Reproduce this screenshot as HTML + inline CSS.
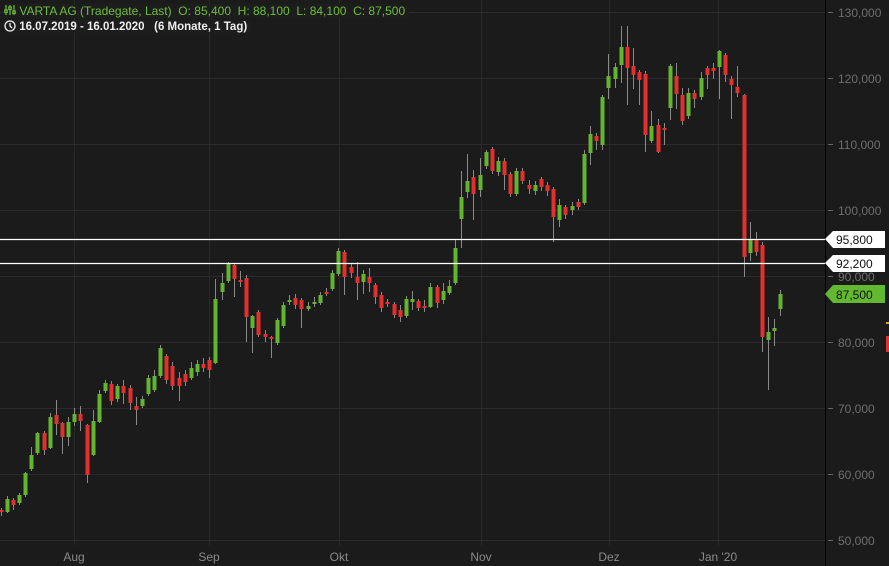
<!DOCTYPE html>
<html><head><meta charset="utf-8"><style>
html,body{margin:0;padding:0;background:#1b1b1b;width:889px;height:566px;overflow:hidden;font-family:"Liberation Sans",sans-serif}
svg{position:absolute;left:0;top:0}
.hd{position:absolute;left:4px;font-size:12px;white-space:nowrap}
</style></head><body>
<svg id="s" width="889" height="566" xmlns="http://www.w3.org/2000/svg">
<g stroke="#2a2a2a" stroke-width="1">
<line x1="0" y1="12.5" x2="825" y2="12.5"/><line x1="0" y1="78.5" x2="825" y2="78.5"/><line x1="0" y1="144.5" x2="825" y2="144.5"/><line x1="0" y1="210.5" x2="825" y2="210.5"/><line x1="0" y1="276.5" x2="825" y2="276.5"/><line x1="0" y1="342.5" x2="825" y2="342.5"/><line x1="0" y1="408.5" x2="825" y2="408.5"/><line x1="0" y1="474.5" x2="825" y2="474.5"/><line x1="0" y1="540.5" x2="825" y2="540.5"/>
<line x1="74.5" y1="0" x2="74.5" y2="545"/><line x1="209.5" y1="0" x2="209.5" y2="545"/><line x1="339.5" y1="0" x2="339.5" y2="545"/><line x1="481.5" y1="0" x2="481.5" y2="545"/><line x1="609.5" y1="0" x2="609.5" y2="545"/><line x1="718.5" y1="0" x2="718.5" y2="545"/>
</g>
<g id="c"></g>
<line x1="0" y1="239.5" x2="825" y2="239.5" stroke="#fff" stroke-width="1.3"/>
<line x1="0" y1="263.5" x2="825" y2="263.5" stroke="#fff" stroke-width="1.3"/>
<line x1="825.5" y1="0" x2="825.5" y2="566" stroke="#000" stroke-width="1"/>
<g stroke="#666"><line x1="828" y1="12.5" x2="833" y2="12.5"/><line x1="828" y1="78.5" x2="833" y2="78.5"/><line x1="828" y1="144.5" x2="833" y2="144.5"/><line x1="828" y1="210.5" x2="833" y2="210.5"/><line x1="828" y1="276.5" x2="833" y2="276.5"/><line x1="828" y1="342.5" x2="833" y2="342.5"/><line x1="828" y1="408.5" x2="833" y2="408.5"/><line x1="828" y1="474.5" x2="833" y2="474.5"/><line x1="828" y1="540.5" x2="833" y2="540.5"/></g>
<g fill="#6e6e6e" font-family="Liberation Sans, sans-serif" font-size="12">
<text x="838" y="17">130,000</text><text x="838" y="83">120,000</text><text x="838" y="149">110,000</text><text x="838" y="215">100,000</text><text x="838" y="281">90,000</text><text x="838" y="347">80,000</text><text x="838" y="413">70,000</text><text x="838" y="479">60,000</text><text x="838" y="545">50,000</text>
</g>
<polygon points="825,239 833,231 885,231 885,248 833,248" fill="#fff"/>
<polygon points="825,263 833,255 885,255 885,272 833,272" fill="#fff"/>
<polygon points="825,294 833,285 885,285 885,303 833,303" fill="#63b832"/>
<g fill="#111" font-family="Liberation Sans, sans-serif" font-size="12">
<text x="836" y="244">95,800</text><text x="836" y="268">92,200</text><text x="836" y="299">87,500</text></g>
<rect x="886" y="322" width="3" height="2" fill="#d4b000"/>
<rect x="886" y="336" width="3" height="16" fill="#d33"/>
<g fill="#8a8a8a" font-family="Liberation Sans, sans-serif" font-size="12" text-anchor="middle">
<text x="74" y="561">Aug</text><text x="209" y="561">Sep</text><text x="339" y="561">Okt</text><text x="481" y="561">Nov</text><text x="609" y="561">Dez</text><text x="718" y="561">Jan '20</text></g>
</svg>
<div class="hd" style="top:4px;color:#6cbf3a;background:#1d1d1d;padding-right:4px">
<svg width="12" height="12" style="position:static;vertical-align:-1px" viewBox="0 0 12 12"><g stroke="#6cbf3a" stroke-width="1.2" fill="none"><line x1="2" y1="1" x2="2" y2="11"/><line x1="6" y1="1" x2="6" y2="11"/><line x1="10" y1="1" x2="10" y2="11"/><rect x="0.8" y="6" width="2.4" height="2.4" fill="#1d1d1d"/><rect x="4.8" y="3" width="2.4" height="2.4" fill="#1d1d1d"/><rect x="8.8" y="7" width="2.4" height="2.4" fill="#1d1d1d"/></g></svg>
 VARTA AG (Tradegate, Last)&nbsp; O: 85,400&nbsp; H: 88,100&nbsp; L: 84,100&nbsp; C: 87,500</div>
<div class="hd" style="top:20px;color:#eee;font-weight:bold;font-size:11.5px;background:#1d1d1d;padding-right:4px">
<svg width="12" height="12" style="position:static;vertical-align:-2px" viewBox="0 0 12 12"><circle cx="6" cy="6" r="5" stroke="#eee" stroke-width="1.3" fill="none"/><path d="M6 3V6L8 8" stroke="#eee" stroke-width="1.3" fill="none"/></svg>
 16.07.2019 - 16.01.2020&nbsp;&nbsp; (6 Monate, 1 Tag)</div>
<script>
var D=[
[1,510,512,508,516],[7,512,499,496,513],[13,500,505,498,510],[19,503,495,493,505],[25,495,473,472,497],[31,469,455,447,471],[37,453,433,432,455],[44,433,450,431,455],[50,448,417,413,449],[56,415,424,400,435],[62,423,437,422,454],[68,437,422,417,446],[74,422,414,408,426],[80,414,421,406,431],[87,425,475,424,483],[93,455,421,410,456],[99,422,394,390,423],[105,391,383,380,393],[111,384,401,381,405],[117,399,386,384,402],[123,386,393,380,404],[130,388,403,385,410],[136,406,410,397,425],[142,406,399,396,408],[148,394,378,375,396],[154,390,376,370,392],[160,376,348,345,378],[166,356,380,354,384],[172,366,386,362,390],[179,378,386,372,401],[185,374,382,370,386],[191,378,368,362,380],[197,372,364,360,376],
[203,364,368,358,372],[209,360,370,357,378],[215,363,299,279,364],[222,292,283,273,300],[228,281,264,262,283],[234,265,279,264,297],[240,280,281,271,287],[246,278,317,275,342],[252,328,316,315,353],[258,312,335,310,337],[265,334,337,330,342],[271,337,339,336,358],[277,343,320,318,345],[283,326,305,302,328],[289,302,300,295,305],[295,298,305,294,309],[301,300,309,298,328],[308,309,306,302,311],[314,304,302,297,307],[320,303,295,292,305],[326,292,294,288,296],[332,289,273,270,291],[338,274,251,248,276],[344,252,277,250,295],[351,267,273,264,278],[357,277,283,262,300],[363,282,274,270,294],[369,277,283,268,292],[375,285,297,283,304],[381,295,308,292,312],[387,302,303,299,307],[394,304,315,302,318],[400,310,317,305,322],[406,316,299,296,318],[412,302,299,291,310],[418,301,308,299,311],[424,306,306,300,312],[430,307,287,283,308],[437,287,303,285,308],[443,300,291,283,304],[449,293,286,280,295],[455,283,248,240,285],
[461,219,197,171,248],[467,192,181,154,198],[473,177,194,170,220],[480,190,175,158,197],[486,166,152,150,169],[492,149,171,147,174],[498,172,161,157,176],[504,161,175,158,190],[510,174,194,172,197],[516,194,171,168,196],[522,171,181,168,184],[529,185,189,180,194],[535,191,185,181,195],[541,179,187,177,191],[547,185,191,182,196],[553,189,217,187,242],[559,220,205,199,227],[565,207,215,205,219],[572,210,206,202,215],[578,202,207,199,210],[584,203,154,150,205],[590,153,134,126,165],[596,136,141,133,150],[602,145,97,95,150],[608,88,76,54,99],[615,79,67,63,88],[621,65,47,26,83],[627,47,68,26,105],[633,66,75,48,89],[639,72,80,70,105],[645,74,135,71,152],[651,141,126,111,143],[658,125,152,119,153],[664,128,129,123,145],[670,108,66,64,120],[676,76,94,63,109],[682,95,121,88,125],[688,116,93,88,119],[694,93,99,90,108],[701,97,78,72,100],[707,68,75,66,89],[713,68,71,63,79],[719,67,51,50,99],[725,55,75,53,82],[731,79,85,76,119],[737,87,93,66,97],[744,95,257,94,277],[750,253,239,222,261],[756,239,252,232,256],[762,245,337,242,352],[768,340,332,317,390],[774,331,328,319,346],[780,309,294,290,316]];
var g=document.getElementById('c'),h='';
D.forEach(function(d){var x=d[0],o=d[1],c=d[2],up=c<o,col=up?'#63b52f':'#e3302f';
var t=Math.min(o,c),b=Math.max(o,c);if(b-t<2)b=t+2;
h+='<line x1="'+(x+0.5)+'" y1="'+d[3]+'" x2="'+(x+0.5)+'" y2="'+d[4]+'" stroke="#8a8a8a" stroke-width="1"/>';
h+='<rect x="'+(x-1.5)+'" y="'+t+'" width="4" height="'+(b-t)+'" fill="'+col+'"/>';});
g.innerHTML=h;
</script>
</body></html>
